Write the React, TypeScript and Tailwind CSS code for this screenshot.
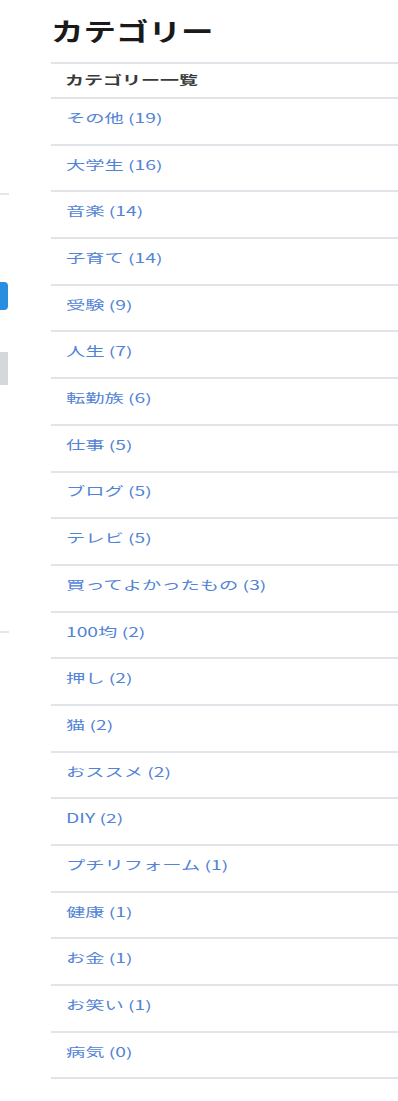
import React from 'react';

const categories = [
  { name: 'その他', count: 19 },
  { name: '大学生', count: 16 },
  { name: '音楽', count: 14 },
  { name: '子育て', count: 14 },
  { name: '受験', count: 9 },
  { name: '人生', count: 7 },
  { name: '転勤族', count: 6 },
  { name: '仕事', count: 5 },
  { name: 'ブログ', count: 5 },
  { name: 'テレビ', count: 5 },
  { name: '買ってよかったもの', count: 3 },
  { name: '100均', count: 2 },
  { name: '押し', count: 2 },
  { name: '猫', count: 2 },
  { name: 'おススメ', count: 2 },
  { name: 'DIY', count: 2 },
  { name: 'プチリフォーム', count: 1 },
  { name: '健康', count: 1 },
  { name: 'お金', count: 1 },
  { name: 'お笑い', count: 1 },
  { name: '病気', count: 0 },
];

export default function App() {
  return (
    <div
      className="flex w-[398px] min-h-[1101px] overflow-hidden bg-white"
      style={{ fontFamily: '"Noto Sans CJK JP", "Noto Sans", sans-serif' }}
    >
      {/* cut-off left column */}
      <div className="w-[9px] shrink-0 flex flex-col">
        <div className="mt-[193px] h-[2px] bg-[#e4e6e9]" />
        <div className="mt-[87px] h-[28px] w-[8px] rounded-r-[4px] bg-[#2a8ee0]" />
        <div className="mt-[42px] h-[33px] w-[8px] bg-[#d5d8db]" />
        <div className="mt-[246px] h-[2px] bg-[#e4e6e9]" />
      </div>

      {/* category widget */}
      <div className="ml-[42px] flex-1 min-w-0 flex flex-col">
        <div className="h-[62px] flex items-center pb-[2px]">
          <h2 className="inline-block origin-left scale-x-[1.3] text-[25px] font-bold leading-none text-[#1a1a1a]">
            カテゴリー
          </h2>
        </div>
        <ul className="border-t-2 border-[#e1e5ea]">
          <li className="h-[35px] flex items-center pl-[14px] pb-[1px] border-b-2 border-[#e1e5ea]">
            <span className="inline-block origin-left scale-x-[1.52] text-[12.5px] font-bold text-[#3a3a3a]">
              カテゴリー一覧
            </span>
          </li>
          {categories.map((c) => (
            <li
              key={c.name}
              className="h-[46.7px] flex items-center pl-[15px] pb-[6px] border-b-2 border-[#e1e5ea]"
            >
              <a className="inline-block origin-left scale-x-[1.54] text-[12.5px] text-[#5283d6]">
                {c.name} ({c.count})
              </a>
            </li>
          ))}
        </ul>
      </div>
    </div>
  );
}
